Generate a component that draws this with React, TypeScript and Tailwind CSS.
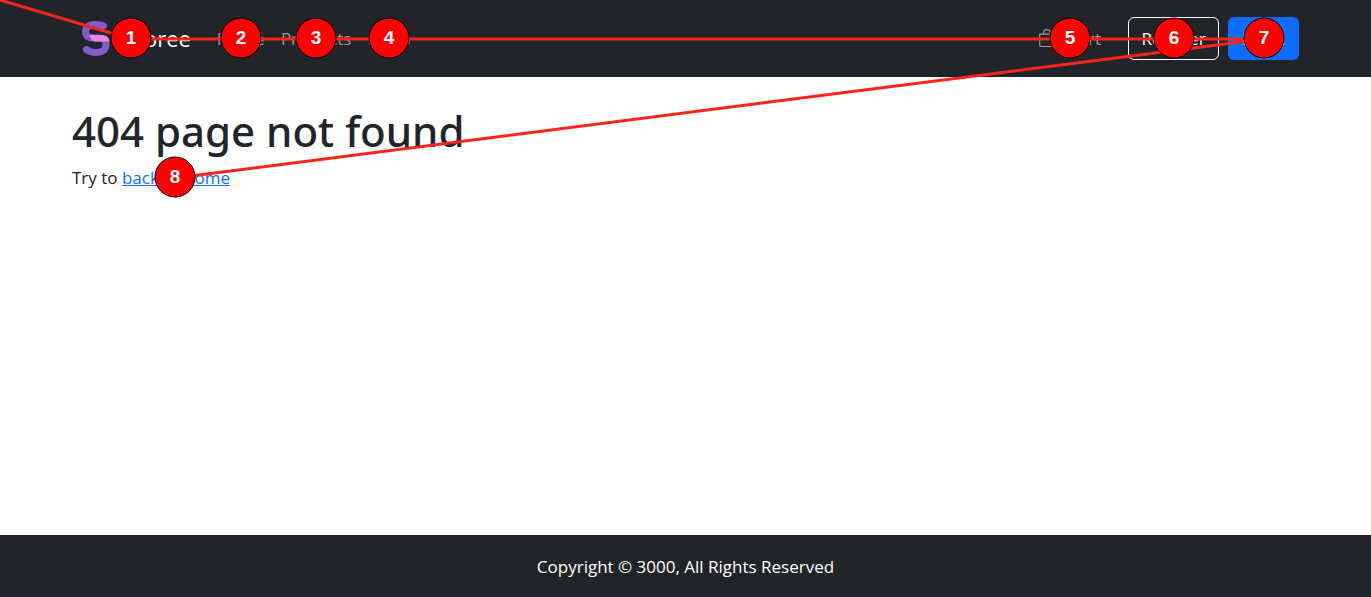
import { BsBag } from "react-icons/bs";

type Marker = { n: number; x: number; y: number };

const markers: Marker[] = [
  { n: 1, x: 131, y: 38 },
  { n: 2, x: 241, y: 38 },
  { n: 3, x: 316, y: 38 },
  { n: 4, x: 389, y: 38 },
  { n: 5, x: 1070, y: 38 },
  { n: 6, x: 1174, y: 38 },
  { n: 7, x: 1264, y: 38 },
  { n: 8, x: 175, y: 177 },
];

const navLinks = ["Home", "Products", "Blogs"];

function Logo() {
  return (
    <svg viewBox="0 0 48 48" className="size-12" fill="none" aria-hidden="true">
      <path
        d="M31.5 12C29 10.500 26 10.500 23 10.500C17 10.500 13.500 13 13.500 17.500C13.500 21.500 16.500 24 21 24H26.500C31 24 34 26.500 34 30.500C34 36 30 38.500 24 38.500C19.500 38.500 17 37.500 14.500 35.500"
        stroke="#8359cb"
        strokeWidth="7"
        strokeLinecap="round"
        strokeLinejoin="round"
      />
      <path
        d="M17.500 21H30C34.500 21 37 23.500 37.500 27.500H24C20.500 27.500 18.500 25 17.500 21Z"
        fill="#e986e4"
      />
    </svg>
  );
}

function TabOrder() {
  return (
    <div className="pointer-events-none absolute inset-0 overflow-hidden">
      <svg className="absolute inset-0 size-full" fill="none" aria-hidden="true">
        <polyline
          points={"0,0 " + markers.map((m) => `${m.x},${m.y + 1}`).join(" ")}
          stroke="#fb241d"
          strokeWidth="3"
        />
      </svg>
      {markers.map((m) => (
        <span
          key={m.n}
          className="absolute flex size-[41px] -translate-x-1/2 -translate-y-1/2 items-center justify-center rounded-full border border-black bg-[#ff0000] pb-[2px] font-['Liberation_Sans',sans-serif] text-[19px] leading-none font-bold text-white"
          style={{ left: m.x, top: m.y }}
        >
          {m.n}
        </span>
      ))}
    </div>
  );
}

export default function App() {
  return (
    <div className="relative flex min-h-screen flex-col bg-white font-['Open_Sans',sans-serif] text-[17px] leading-[27px] text-[#212529]">
      <header className="bg-[#212529] px-4 pt-[14px] pb-[15px]">
        <nav className="mx-auto flex max-w-[1227px] items-center">
          <a href="#" className="mr-[18px] flex items-center gap-1 text-[22px] text-white">
            <Logo />
            Storee
          </a>
          <ul className="flex">
            {navLinks.map((label) => (
              <li key={label}>
                <a href="#" className="px-2 text-[#9b9d9e]">
                  {label}
                </a>
              </li>
            ))}
          </ul>
          <a href="#" className="mr-[27px] ml-auto flex items-center gap-3 text-[#9b9d9e]">
            <BsBag className="size-[18px]" />
            Cart
          </a>
          <div className="flex gap-[9px]">
            <button type="button" className="h-[43px] w-[91px] rounded-md border border-white text-white">
              Register
            </button>
            <button type="button" className="h-[43px] w-[71px] rounded-md bg-[#0d6efd] text-white">
              Login
            </button>
          </div>
        </nav>
      </header>
      <main className="flex-1 px-4 pt-[27px]">
        <div className="mx-auto max-w-[1227px]">
          <h1 className="mb-[6px] text-[42px] leading-[54px] font-['Noto_Sans',sans-serif] font-medium">
            404 page not found
          </h1>
          <p>
            Try to{" "}
            <a href="#" className="text-[#0d6efd] underline">
              back to home
            </a>
          </p>
        </div>
      </main>
      <footer className="bg-[#212529] px-4 pt-[18px] pb-[17px] text-center text-white">
        Copyright © 3000, All Rights Reserved
      </footer>
      <TabOrder />
    </div>
  );
}
